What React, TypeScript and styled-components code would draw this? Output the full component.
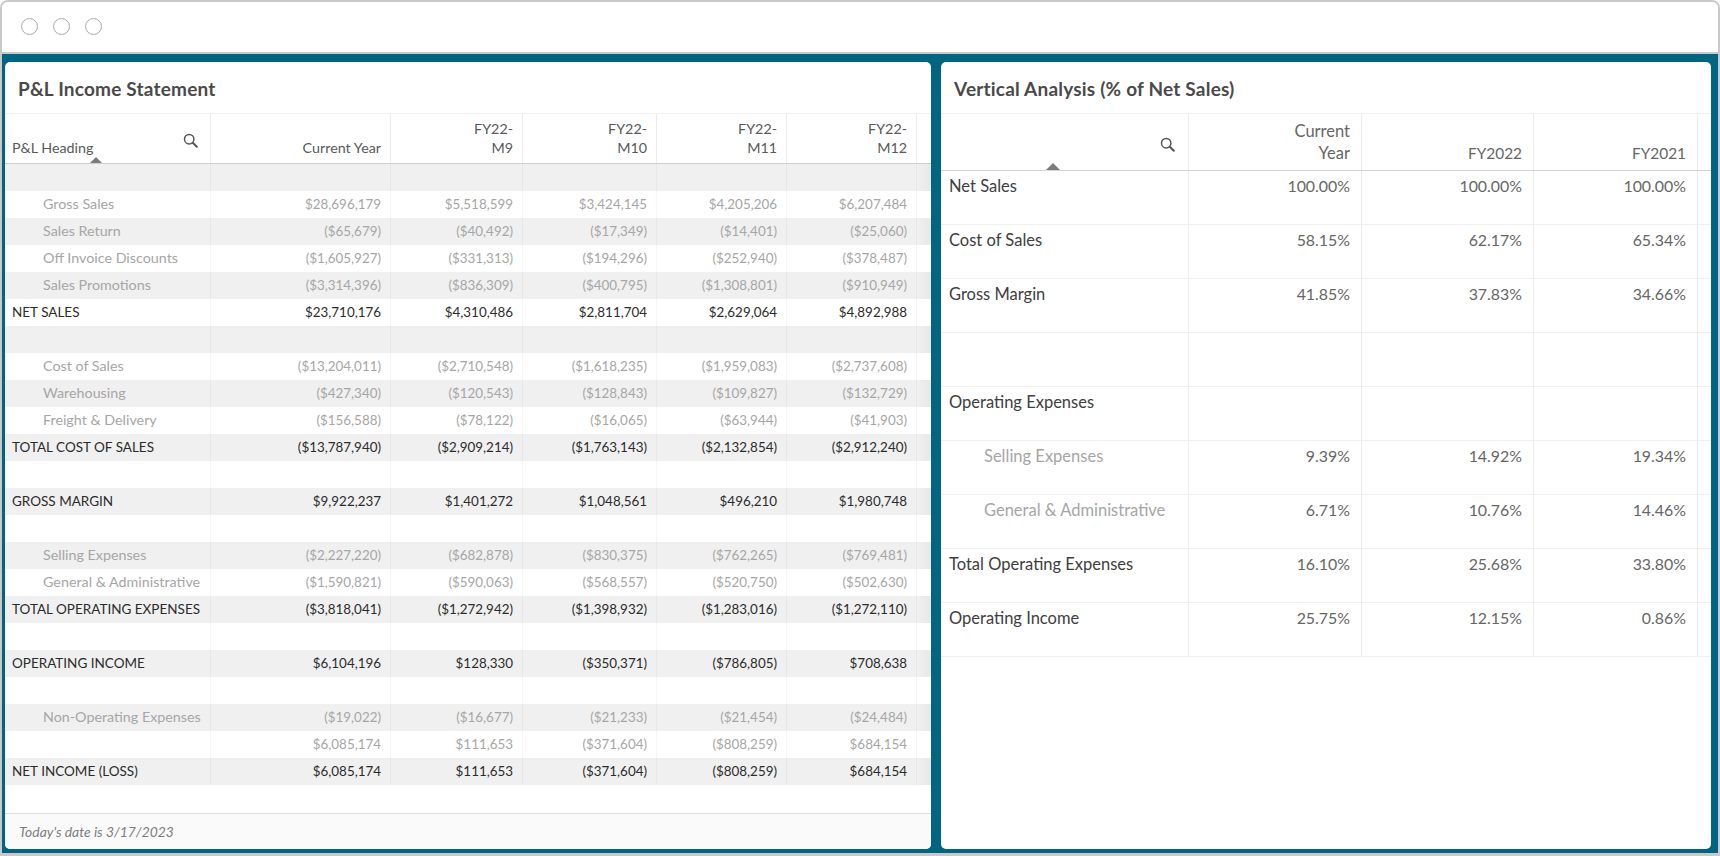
import React from "react";
import styled, { createGlobalStyle } from "styled-components";

const GlobalStyle = createGlobalStyle`
  html, body {
    margin: 0;
    padding: 0;
    background: #fff;
  }
  body {
    font-family: Lato, "Noto Sans", sans-serif;
  }
`;

type PnlRow = {
  label?: string;
  kind?: "sub" | "total";
  values?: string[];
};

const pnlColumns = [
  ["Current Year"],
  ["FY22-", "M9"],
  ["FY22-", "M10"],
  ["FY22-", "M11"],
  ["FY22-", "M12"],
];

const pnlRows: PnlRow[] = [
  {},
  { label: "Gross Sales", kind: "sub", values: ["$28,696,179", "$5,518,599", "$3,424,145", "$4,205,206", "$6,207,484"] },
  { label: "Sales Return", kind: "sub", values: ["($65,679)", "($40,492)", "($17,349)", "($14,401)", "($25,060)"] },
  { label: "Off Invoice Discounts", kind: "sub", values: ["($1,605,927)", "($331,313)", "($194,296)", "($252,940)", "($378,487)"] },
  { label: "Sales Promotions", kind: "sub", values: ["($3,314,396)", "($836,309)", "($400,795)", "($1,308,801)", "($910,949)"] },
  { label: "NET SALES", kind: "total", values: ["$23,710,176", "$4,310,486", "$2,811,704", "$2,629,064", "$4,892,988"] },
  {},
  { label: "Cost of Sales", kind: "sub", values: ["($13,204,011)", "($2,710,548)", "($1,618,235)", "($1,959,083)", "($2,737,608)"] },
  { label: "Warehousing", kind: "sub", values: ["($427,340)", "($120,543)", "($128,843)", "($109,827)", "($132,729)"] },
  { label: "Freight & Delivery", kind: "sub", values: ["($156,588)", "($78,122)", "($16,065)", "($63,944)", "($41,903)"] },
  { label: "TOTAL COST OF SALES", kind: "total", values: ["($13,787,940)", "($2,909,214)", "($1,763,143)", "($2,132,854)", "($2,912,240)"] },
  {},
  { label: "GROSS MARGIN", kind: "total", values: ["$9,922,237", "$1,401,272", "$1,048,561", "$496,210", "$1,980,748"] },
  {},
  { label: "Selling Expenses", kind: "sub", values: ["($2,227,220)", "($682,878)", "($830,375)", "($762,265)", "($769,481)"] },
  { label: "General & Administrative", kind: "sub", values: ["($1,590,821)", "($590,063)", "($568,557)", "($520,750)", "($502,630)"] },
  { label: "TOTAL OPERATING EXPENSES", kind: "total", values: ["($3,818,041)", "($1,272,942)", "($1,398,932)", "($1,283,016)", "($1,272,110)"] },
  {},
  { label: "OPERATING INCOME", kind: "total", values: ["$6,104,196", "$128,330", "($350,371)", "($786,805)", "$708,638"] },
  {},
  { label: "Non-Operating Expenses", kind: "sub", values: ["($19,022)", "($16,677)", "($21,233)", "($21,454)", "($24,484)"] },
  { label: "", kind: "sub", values: ["$6,085,174", "$111,653", "($371,604)", "($808,259)", "$684,154"] },
  { label: "NET INCOME (LOSS)", kind: "total", values: ["$6,085,174", "$111,653", "($371,604)", "($808,259)", "$684,154"] },
];

const verticalRows: { label?: string; sub?: boolean; values?: string[] }[] = [
  { label: "Net Sales", values: ["100.00%", "100.00%", "100.00%"] },
  { label: "Cost of Sales", values: ["58.15%", "62.17%", "65.34%"] },
  { label: "Gross Margin", values: ["41.85%", "37.83%", "34.66%"] },
  {},
  { label: "Operating Expenses" },
  { label: "Selling Expenses", sub: true, values: ["9.39%", "14.92%", "19.34%"] },
  { label: "General & Administrative", sub: true, values: ["6.71%", "10.76%", "14.46%"] },
  { label: "Total Operating Expenses", values: ["16.10%", "25.68%", "33.80%"] },
  { label: "Operating Income", values: ["25.75%", "12.15%", "0.86%"] },
];

const SearchGlyph = ({ size = 15 }: { size?: number }) => (
  <svg width={size} height={size} viewBox="0 0 15 15" fill="none" stroke="#555" strokeWidth="1.5">
    <circle cx="6.2" cy="6.2" r="4.7" />
    <path d="M9.8 9.8 L13.8 13.8" strokeWidth="2" strokeLinecap="round" />
  </svg>
);

const App = () => (
  <>
    <GlobalStyle />
    <Frame>
      <TitleBar>
        <Dot />
        <Dot />
        <Dot />
      </TitleBar>
      <Stage>
        <LeftPanel>
          <PanelTitle>P&amp;L Income Statement</PanelTitle>
          <PnlHeader>
            <PnlHeadCell $first>
              P&amp;L Heading
              <PnlSearch>
                <SearchGlyph />
              </PnlSearch>
              <PnlSort />
            </PnlHeadCell>
            {pnlColumns.map((lines) => (
              <PnlHeadCell key={lines.join("")}>
                {lines.map((line) => (
                  <span key={line}>{line}</span>
                ))}
              </PnlHeadCell>
            ))}
            <PnlTail />
          </PnlHeader>
          <PnlBody>
            {pnlRows.map((row, i) => (
              <PnlRowEl key={i} $striped={i % 2 === 0}>
                <PnlCell $kind={row.kind} $label>
                  {row.label}
                </PnlCell>
                {[0, 1, 2, 3, 4].map((c) => (
                  <PnlCell key={c} $kind={row.kind}>
                    {row.values?.[c]}
                  </PnlCell>
                ))}
                <PnlTail $striped={i % 2 === 0} />
              </PnlRowEl>
            ))}
          </PnlBody>
          <Footer>Today's date is 3/17/2023</Footer>
        </LeftPanel>
        <RightPanel>
          <PanelTitle>Vertical Analysis (% of Net Sales)</PanelTitle>
          <VaHeader>
            <VaHeadCell>
              <VaSearch>
                <SearchGlyph />
              </VaSearch>
              <VaSort />
            </VaHeadCell>
            <VaHeadCell>
              <span>Current</span>
              <span>Year</span>
            </VaHeadCell>
            <VaHeadCell $year>FY2022</VaHeadCell>
            <VaHeadCell $year>FY2021</VaHeadCell>
            <VaTail />
          </VaHeader>
          {verticalRows.map((row, i) => (
            <VaRow key={i}>
              <VaCell $label $sub={row.sub}>
                {row.label}
              </VaCell>
              {[0, 1, 2].map((c) => (
                <VaCell key={c}>{row.values?.[c]}</VaCell>
              ))}
              <VaTail />
            </VaRow>
          ))}
        </RightPanel>
      </Stage>
    </Frame>
  </>
);

export default App;

const Frame = styled.div`
  width: 1720px;
  height: 856px;
  box-sizing: border-box;
  display: flex;
  flex-direction: column;
  border: 2px solid #c9c9c9;
  border-bottom-width: 3px;
  border-radius: 8px 8px 0 0;
  overflow: hidden;
`;

const TitleBar = styled.div`
  height: 52px;
  flex: none;
  display: flex;
  align-items: center;
  gap: 15px;
  padding: 0 0 2px 19px;
  box-sizing: border-box;
  background: #fff;
  border-bottom: 2px solid #c9c9c9;
`;

const Dot = styled.span`
  width: 17px;
  height: 17px;
  box-sizing: border-box;
  border: 1.5px solid #a9a9a9;
  border-radius: 50%;
`;

const Stage = styled.div`
  flex: 1;
  min-height: 0;
  display: flex;
  gap: 10px;
  padding: 8px 5px 4px 3px;
  background: #006580;
`;

const Panel = styled.section`
  display: flex;
  flex-direction: column;
  background: #fff;
  border-radius: 5px;
  overflow: hidden;
`;

const LeftPanel = styled(Panel)`
  width: 926px;
`;

const RightPanel = styled(Panel)`
  width: 770px;
`;

const PanelTitle = styled.h2`
  margin: 0;
  height: 52px;
  flex: none;
  display: flex;
  align-items: center;
  padding: 2px 0 0 13px;
  box-sizing: border-box;
  font-size: 19px;
  font-weight: 700;
  letter-spacing: 0.2px;
  color: #4a4a4a;
  border-bottom: 1px solid #f0f0f0;
`;

const pnlGrid = "206px 180px 132px 134px 130px 130px 1fr";
const vaGrid = "248px 173px 172px 164px 1fr";

const PnlHeader = styled.div`
  height: 50px;
  flex: none;
  display: grid;
  grid-template-columns: ${pnlGrid};
  border-bottom: 1px solid #cfcfcf;
  box-sizing: border-box;
`;

const PnlHeadCell = styled.div<{ $first?: boolean }>`
  position: relative;
  display: flex;
  flex-direction: ${({ $first }) => ($first ? "row" : "column")};
  justify-content: ${({ $first }) => ($first ? "flex-start" : "flex-end")};
  align-items: flex-end;
  padding: 0 9px 6px 7px;
  box-sizing: border-box;
  font-size: 14.3px;
  line-height: 19px;
  color: #595959;
  text-align: right;
  border-right: 1px solid #ececec;
`;

const PnlSearch = styled.span`
  position: absolute;
  right: 12px;
  top: 19px;
  line-height: 0;
`;

const PnlSort = styled.span`
  position: absolute;
  left: 85px;
  bottom: 0;
  width: 0;
  height: 0;
  border-left: 6px solid transparent;
  border-right: 6px solid transparent;
  border-bottom: 6px solid #7b7b7b;
`;

const PnlBody = styled.div`
  flex: 1;
  min-height: 0;
`;

const PnlRowEl = styled.div<{ $striped: boolean }>`
  height: 27px;
  display: grid;
  grid-template-columns: ${pnlGrid};
  background: ${({ $striped }) => ($striped ? "#f0f0f0" : "#fff")};
`;

const PnlCell = styled.div<{ $kind?: "sub" | "total"; $label?: boolean }>`
  display: flex;
  align-items: center;
  justify-content: ${({ $label }) => ($label ? "flex-start" : "flex-end")};
  box-sizing: border-box;
  padding: ${({ $label, $kind }) =>
    $label ? `0 0 2px ${$kind === "sub" ? 38 : 7}px` : "0 9px 2px 0"};
  font-size: ${({ $label, $kind }) =>
    !$label ? "13.4px" : $kind === "sub" ? "14.3px" : "13.5px"};
  white-space: nowrap;
  color: ${({ $kind }) => ($kind === "total" ? "#2b2b2b" : "#a6a6a6")};
  border-right: 1px solid rgba(0, 0, 0, 0.035);
`;

const PnlTail = styled.div<{ $striped?: boolean }>`
  background: ${({ $striped }) =>
    $striped ? "linear-gradient(to right, #f0f0f0, #e8e8e8)" : "transparent"};
`;

const Footer = styled.div`
  height: 36px;
  flex: none;
  display: flex;
  align-items: center;
  padding-left: 14px;
  box-sizing: border-box;
  background: #fafafa;
  border-top: 1px solid #dcdcdc;
  font-size: 13.9px;
  font-style: italic;
  color: #7d7d7d;
`;

const VaHeader = styled.div`
  height: 57px;
  flex: none;
  display: grid;
  grid-template-columns: ${vaGrid};
  border-bottom: 1px solid #d4d4d4;
  box-sizing: border-box;
`;

const VaHeadCell = styled.div<{ $year?: boolean }>`
  position: relative;
  display: flex;
  flex-direction: column;
  align-items: flex-end;
  justify-content: flex-end;
  padding: 0 11px 6px 0;
  box-sizing: border-box;
  font-size: ${({ $year }) => ($year ? "15.4px" : "16.5px")};
  line-height: 22px;
  color: #666;
  border-right: 1px solid #ececec;
`;

const VaSearch = styled.span`
  position: absolute;
  right: 13px;
  top: 23px;
  line-height: 0;
`;

const VaSort = styled.span`
  position: absolute;
  left: 105px;
  bottom: 0;
  width: 0;
  height: 0;
  border-left: 7px solid transparent;
  border-right: 7px solid transparent;
  border-bottom: 7px solid #7b7b7b;
`;

const VaRow = styled.div`
  height: 54px;
  flex: none;
  display: grid;
  grid-template-columns: ${vaGrid};
  border-bottom: 1px solid #efefef;
  box-sizing: border-box;
`;

const VaCell = styled.div<{ $label?: boolean; $sub?: boolean }>`
  box-sizing: border-box;
  padding: ${({ $label, $sub }) =>
    $label ? `3px 0 0 ${$sub ? 43 : 8}px` : "3px 11px 0 0"};
  font-size: ${({ $label }) => ($label ? "16.5px" : "15.9px")};
  line-height: 24px;
  white-space: nowrap;
  text-align: ${({ $label }) => ($label ? "left" : "right")};
  color: ${({ $label, $sub }) => ($sub ? "#a6a6a6" : $label ? "#404040" : "#666")};
  border-right: 1px solid #ececec;
`;

const VaTail = styled.div``;
